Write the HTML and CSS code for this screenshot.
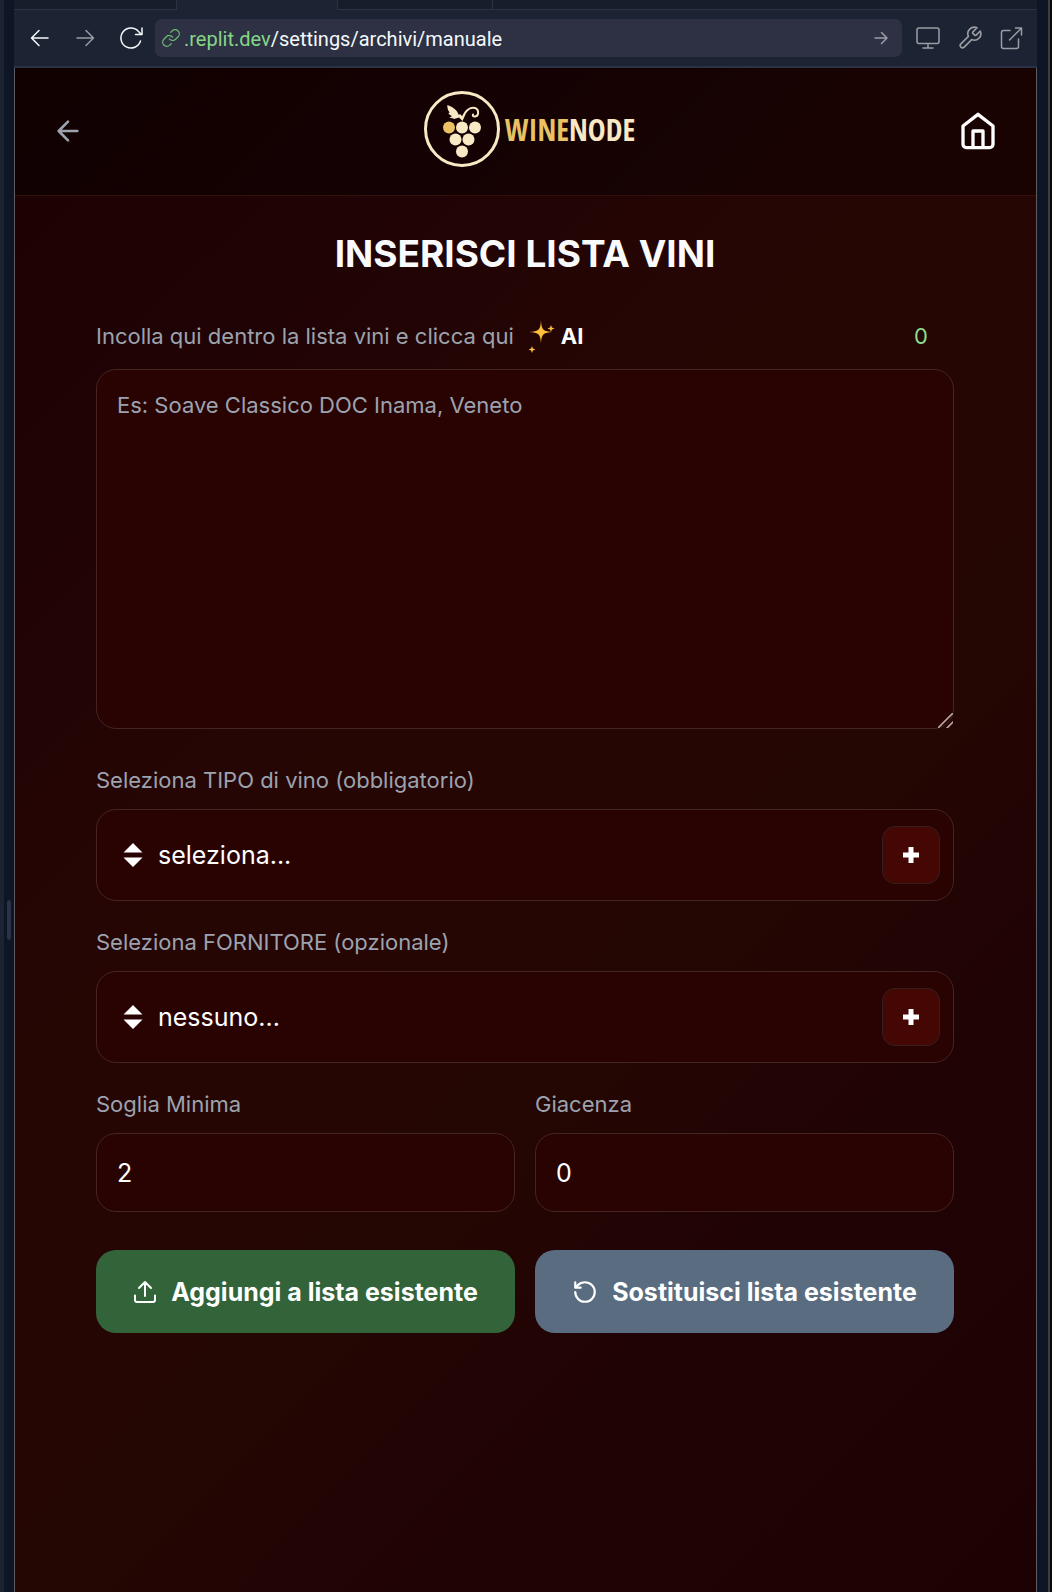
FILE: index.html
```html
<!DOCTYPE html>
<html lang="it">
<head>
<meta charset="utf-8">
<meta name="viewport" content="width=device-width, initial-scale=1">
<title>WineNode - Inserisci lista vini</title>
<link rel="stylesheet" href="styles.css">
</head>
<body>
<div class="workspace">
  <div class="gutter gutter-left"><span class="grip"></span></div>

  <div class="pane">
    <div class="tabs"><span class="tab tab-first"></span><span class="tab tab-active"></span><span class="tab tab-next"></span><span class="tab tab-rest"></span></div>

    <div class="toolbar">
      <div class="nav">
        <button class="tool bright" type="button" aria-label="Back"><svg width="24" height="24" viewBox="0 0 24 24"><path d="M20 12H4M11 4.500L3.500 12l7.500 7.500"/></svg></button>
        <button class="tool" type="button" aria-label="Forward"><svg width="24" height="24" viewBox="0 0 24 24"><path d="M4 12h16M13 4.500l7.500 7.500-7.500 7.500"/></svg></button>
        <button class="tool bright" type="button" aria-label="Reload"><svg width="26" height="26" viewBox="0 0 26 26"><path d="M22.500 16A10 10 0 1 1 20.500 6.500l3 3M24 3v6.500h-6.500"/></svg></button>
      </div>
      <div class="address">
        <svg class="link-icon" width="20" height="20" viewBox="0 0 24 24"><path d="M10 13a5 5 0 0 0 7.540.54l3-3a5 5 0 0 0-7.070-7.070l-1.720 1.710M14 11a5 5 0 0 0-7.540-.54l-3 3a5 5 0 0 0 7.070 7.070l1.710-1.710"/></svg>
        <span class="url"><span class="host">.replit.dev</span>/settings/archivi/manuale</span>
        <button class="tool go" type="button" aria-label="Go"><svg width="16" height="16" viewBox="0 0 16 16"><path d="M2 8h12M8.500 2.500L14 8l-5.500 5.500"/></svg></button>
      </div>
      <div class="actions">
        <button class="tool" type="button" aria-label="Devices"><svg width="26" height="26" viewBox="0 0 26 26"><rect x="2" y="3" width="22" height="15.500" rx="2"/><path d="M13 18.500V23M8 23h10"/></svg></button>
        <button class="tool" type="button" aria-label="Developer tools"><svg width="26" height="26" viewBox="0 0 24 24"><path d="M14.700 6.300a1 1 0 0 0 0 1.400l1.600 1.600a1 1 0 0 0 1.400 0l3.770-3.770a6 6 0 0 1-7.940 7.940l-6.910 6.910a2.120 2.120 0 0 1-3-3l6.910-6.910a6 6 0 0 1 7.940-7.940z"/></svg></button>
        <button class="tool" type="button" aria-label="Open in new tab"><svg width="26" height="26" viewBox="0 0 26 26"><path d="M11 5.500H4.500a2 2 0 0 0-2 2v14a2 2 0 0 0 2 2h13a2 2 0 0 0 2-2V14M16.500 3H22.500v7M22.500 3L10.500 15"/></svg></button>
      </div>
    </div>

    <div class="app">
      <header class="app-header">
        <button class="icon-button back" type="button" aria-label="Indietro"><svg width="32" height="32" viewBox="0 0 24 24"><path d="M19 12H5M12 19l-7-7 7-7"/></svg></button>
        <div class="logo">
          <svg width="76" height="76" viewBox="0 0 76 76">
            <circle class="ring" cx="38" cy="38" r="36.500"/>
            <g class="cream">
              <path d="M23.300 14c5 1.500 10 5 11.500 10l1.200-1 3 3 3-4-3.500 8-3.500-3.500-5 1.500c-1-1-1.500-1-4.500-1l2.500-2c-1.500-1-2.500-1-3.700-3l1.500-.5c-2-2-2.500-4-2.500-7.500z"/>
              <circle cx="38" cy="36.500" r="6"/><circle cx="51" cy="36.500" r="6"/>
              <circle cx="31.500" cy="48.500" r="6"/><circle cx="44.500" cy="48.500" r="6"/>
              <circle cx="38" cy="60.500" r="6"/>
            </g>
            <circle class="gold" cx="25" cy="36.500" r="6"/>
            <path class="curl" d="M38.500 27c3-8 8-11 12.500-10 4.500 1.500 4 8.500-.5 8.500-1.500 0-2-1-1.500-2"/>
          </svg>
          <span class="wordmark"><span class="wine">WINE</span>NODE</span>
        </div>
        <button class="icon-button home" type="button" aria-label="Home"><svg width="40" height="40" viewBox="0 0 24 24"><path d="M3 9l9-7 9 7v11a2 2 0 0 1-2 2H5a2 2 0 0 1-2-2zM9 22V12h6v10"/></svg></button>
      </header>

      <main class="content">
        <h1>INSERISCI LISTA VINI</h1>
        <form class="form">
          <div class="field list-field">
            <div class="label-row">
              <label for="lista">Incolla qui dentro la lista vini e clicca qui</label>
              <button class="ai" type="button">
                <svg width="26" height="34" viewBox="0 0 26 34"><path d="M12 1C12.500 11 14 12.500 24.500 13 14 13.500 12.500 15 12 25 11.500 15 10 13.500 0 13 10 12.500 11.500 11 12 1zM22 6l.9 2.600 2.600.9-2.600.9L22 13l-.9-2.600-2.600-.9 2.600-.9zM3 27l.9 2.600 2.600.9-2.600.9L3 34l-.9-2.600-2.600-.9 2.600-.9z"/></svg>AI</button>
              <output class="count" for="lista">0</output>
            </div>
            <textarea id="lista" class="box" placeholder="Es: Soave Classico DOC Inama, Veneto"></textarea>
          </div>

          <div class="field">
            <label for="tipo">Seleziona TIPO di vino (obbligatorio)</label>
            <div class="box picker">
              <svg width="20" height="24" viewBox="0 0 20 24"><path d="M10 0l9.500 9.500H.5zM10 24L.5 14.500h19z"/></svg>
              <select id="tipo"><option>seleziona...</option></select>
              <button class="add" type="button" aria-label="Aggiungi tipo"><svg width="18" height="18" viewBox="0 0 18 18"><path d="M9 1v16M1 9h16"/></svg></button>
            </div>
          </div>

          <div class="field">
            <label for="fornitore">Seleziona FORNITORE (opzionale)</label>
            <div class="box picker">
              <svg width="20" height="24" viewBox="0 0 20 24"><path d="M10 0l9.500 9.500H.5zM10 24L.5 14.500h19z"/></svg>
              <select id="fornitore"><option>nessuno...</option></select>
              <button class="add" type="button" aria-label="Aggiungi fornitore"><svg width="18" height="18" viewBox="0 0 18 18"><path d="M9 1v16M1 9h16"/></svg></button>
            </div>
          </div>

          <div class="pair">
            <div class="field">
              <label for="soglia">Soglia Minima</label>
              <input id="soglia" class="box" type="text" inputmode="numeric" value="2">
            </div>
            <div class="field">
              <label for="giacenza">Giacenza</label>
              <input id="giacenza" class="box" type="text" inputmode="numeric" value="0">
            </div>
          </div>

          <div class="pair submit-row">
            <button class="submit green" type="button"><svg width="24" height="24" viewBox="0 0 24 24"><path d="M2 15.500v4.500a2 2 0 0 0 2 2h16a2 2 0 0 0 2-2v-4.500M12 16V2M6 8l6-6 6 6"/></svg>Aggiungi a lista esistente</button>
            <button class="submit blue" type="button"><svg width="26" height="26" viewBox="0 0 24 24"><path d="M3 12a9 9 0 1 0 9-9 9.750 9.750 0 0 0-6.740 2.740L3 8M3 3v5h5"/></svg>Sostituisci lista esistente</button>
          </div>
        </form>
      </main>
    </div>
  </div>

  <div class="gutter gutter-right"></div>
</div>
</body>
</html>
```

FILE: styles.css
```css
* { box-sizing: border-box; }

body {
  margin: 0;
  background: #0e1525;
  color: #fff;
  font-family: Inter, "Liberation Sans", sans-serif;
}

button, input, select, textarea { font: inherit; color: inherit; margin: 0; }
button { background: none; border: 0; padding: 0; cursor: pointer; }
svg { display: block; flex: none; fill: none; stroke: currentColor; stroke-linecap: round; stroke-linejoin: round; }

.workspace { display: flex; min-height: 100vh; }

/* Editor frame around the preview */
.gutter { flex: none; display: flex; align-items: center; background: #0e1525; }
.gutter-left { width: 14px; border-left: 4px solid #1c2333; justify-content: center; padding-top: 248px; }
.gutter-right { width: 15px; border-right: 2px solid #080808; box-shadow: inset -2px 0 #3c3f46; }
.grip { width: 4px; height: 40px; border-radius: 2px; background: #2b3245; }
.pane { flex: 1; min-width: 0; display: flex; flex-direction: column; }

.tabs { flex: none; display: flex; height: 10px; background: #1c2333; }
.tab { background: #171d2b; border-bottom: 1px solid #2b3245; border-right: 1px solid #2b3245; }
.tab-first { width: 163px; }
.tab-active { width: 161px; background: none; border-bottom: 0; }
.tab-next { width: 155px; }
.tab-rest { flex: 1; border-right: 0; }

.toolbar { display: flex; align-items: center; height: 58px; padding: 0 12px; background: #1c2333; border-bottom: 2px solid #2b3245; }
.nav { display: flex; gap: 21px; padding: 0 11px 0 2px; }
.tool { display: flex; align-items: center; justify-content: center; color: #9a9da3; }
.tool svg { stroke-width: 1.5px; }
.tool.bright { color: #f5f9fc; }
.address { flex: 1; min-width: 0; display: flex; align-items: center; gap: 3px; height: 38px; padding: 0 13px 0 6px; border-radius: 7px; background: #2d3143; }
.link-icon { color: #6cba73; stroke-width: 1.5px; }
.url { flex: 1; padding-top: 2px; font: 20px/24px Roboto, "Liberation Sans", sans-serif; color: #f5f9fc; }
.host { color: #86d588; }
.actions { display: flex; gap: 16px; padding-left: 13px; }

/* App */
.app { flex: 1; border: solid #5d5a60; border-width: 0 1px; background: linear-gradient(135deg, #1c0203 0%, #200305 20%, #260604 36%, #240603 62%, #200305 75%, #1d0204 100%); }
.app-header { display: grid; grid-template-columns: 1fr auto 1fr; align-items: center; height: 128px; padding: 0 38px 2px 37px; background: rgba(0, 0, 0, 0.35); border-bottom: 1px solid #33100c; }
.icon-button svg { stroke-width: 2px; }
.back { justify-self: start; color: #9ca3af; }
.home { justify-self: end; }
.logo { display: flex; align-items: center; gap: 5px; padding: 0 0 4px 9px; color: #f8e8c4; }
.ring { stroke-width: 3px; }
.cream { fill: #f8e8c4; stroke: none; }
.gold { fill: #e8c263; stroke: none; }
.curl { stroke-width: 2px; }
.wordmark { font: bold 30px/36px "Liberation Sans Narrow", "Open Sans Condensed", "Roboto Condensed", Roboto, sans-serif; padding-top: 2px; }
.wine { color: #e8c263; }

.content { padding: 34px 82px 40px 81px; }
h1 { margin: 0; text-align: center; font-size: 37px; line-height: 48px; font-weight: 700; color: #f9fafb; }

.form { display: flex; flex-direction: column; gap: 28px; padding-top: 40px; font-size: 22px; line-height: 26px; }
.field { display: flex; flex-direction: column; gap: 16px; min-width: 0; }
.list-field { padding-bottom: 10px; }
.field label { color: #9ca3af; }
.label-row { display: flex; align-items: center; height: 35px; }
.ai { display: flex; align-items: center; gap: 6px; margin-left: 15px; font-weight: 700; }
.ai svg { fill: #fbbf3a; stroke: none; }
.count { margin-left: auto; padding-right: 26px; color: #86df8b; }

.box { width: 100%; border: 1px solid #452522; border-radius: 20px; background: #290302; padding: 0 20px; font-size: 25px; line-height: 32px; outline: none; }
textarea.box { display: block; height: 360px; padding: 19px 20px; font-size: 22px; resize: vertical; }
textarea::placeholder { color: #9ca3af; opacity: 1; }
textarea::-webkit-resizer { background: linear-gradient(135deg, transparent 46%, #b5a5a4 47%, #b5a5a4 53%, transparent 54%, transparent 76%, #b5a5a4 77%, #b5a5a4 83%, transparent 84%); }
input.box { height: 79px; }
.picker { display: flex; align-items: center; gap: 15px; height: 92px; padding: 0 13px 0 26px; }
.picker > svg { fill: #fff; stroke: none; }
.picker select { flex: 1; min-width: 0; height: 58px; appearance: none; border: 0; background: transparent; padding: 0; outline: none; }
.add { display: flex; align-items: center; justify-content: center; width: 58px; height: 58px; border: 1px solid #34201e; border-radius: 13px; background: #450704; }
.add svg { stroke-width: 5px; stroke-linecap: butt; }

.pair { display: grid; grid-template-columns: 1fr 1fr; gap: 20px; }
.submit-row { padding-top: 10px; }
.submit { display: flex; align-items: center; justify-content: center; gap: 14px; height: 83px; border-radius: 20px; font-size: 25px; font-weight: 700; white-space: nowrap; }
.submit svg { stroke-width: 2px; }
.green { background: #336339; }
.blue { background: #5a6d80; }
```
